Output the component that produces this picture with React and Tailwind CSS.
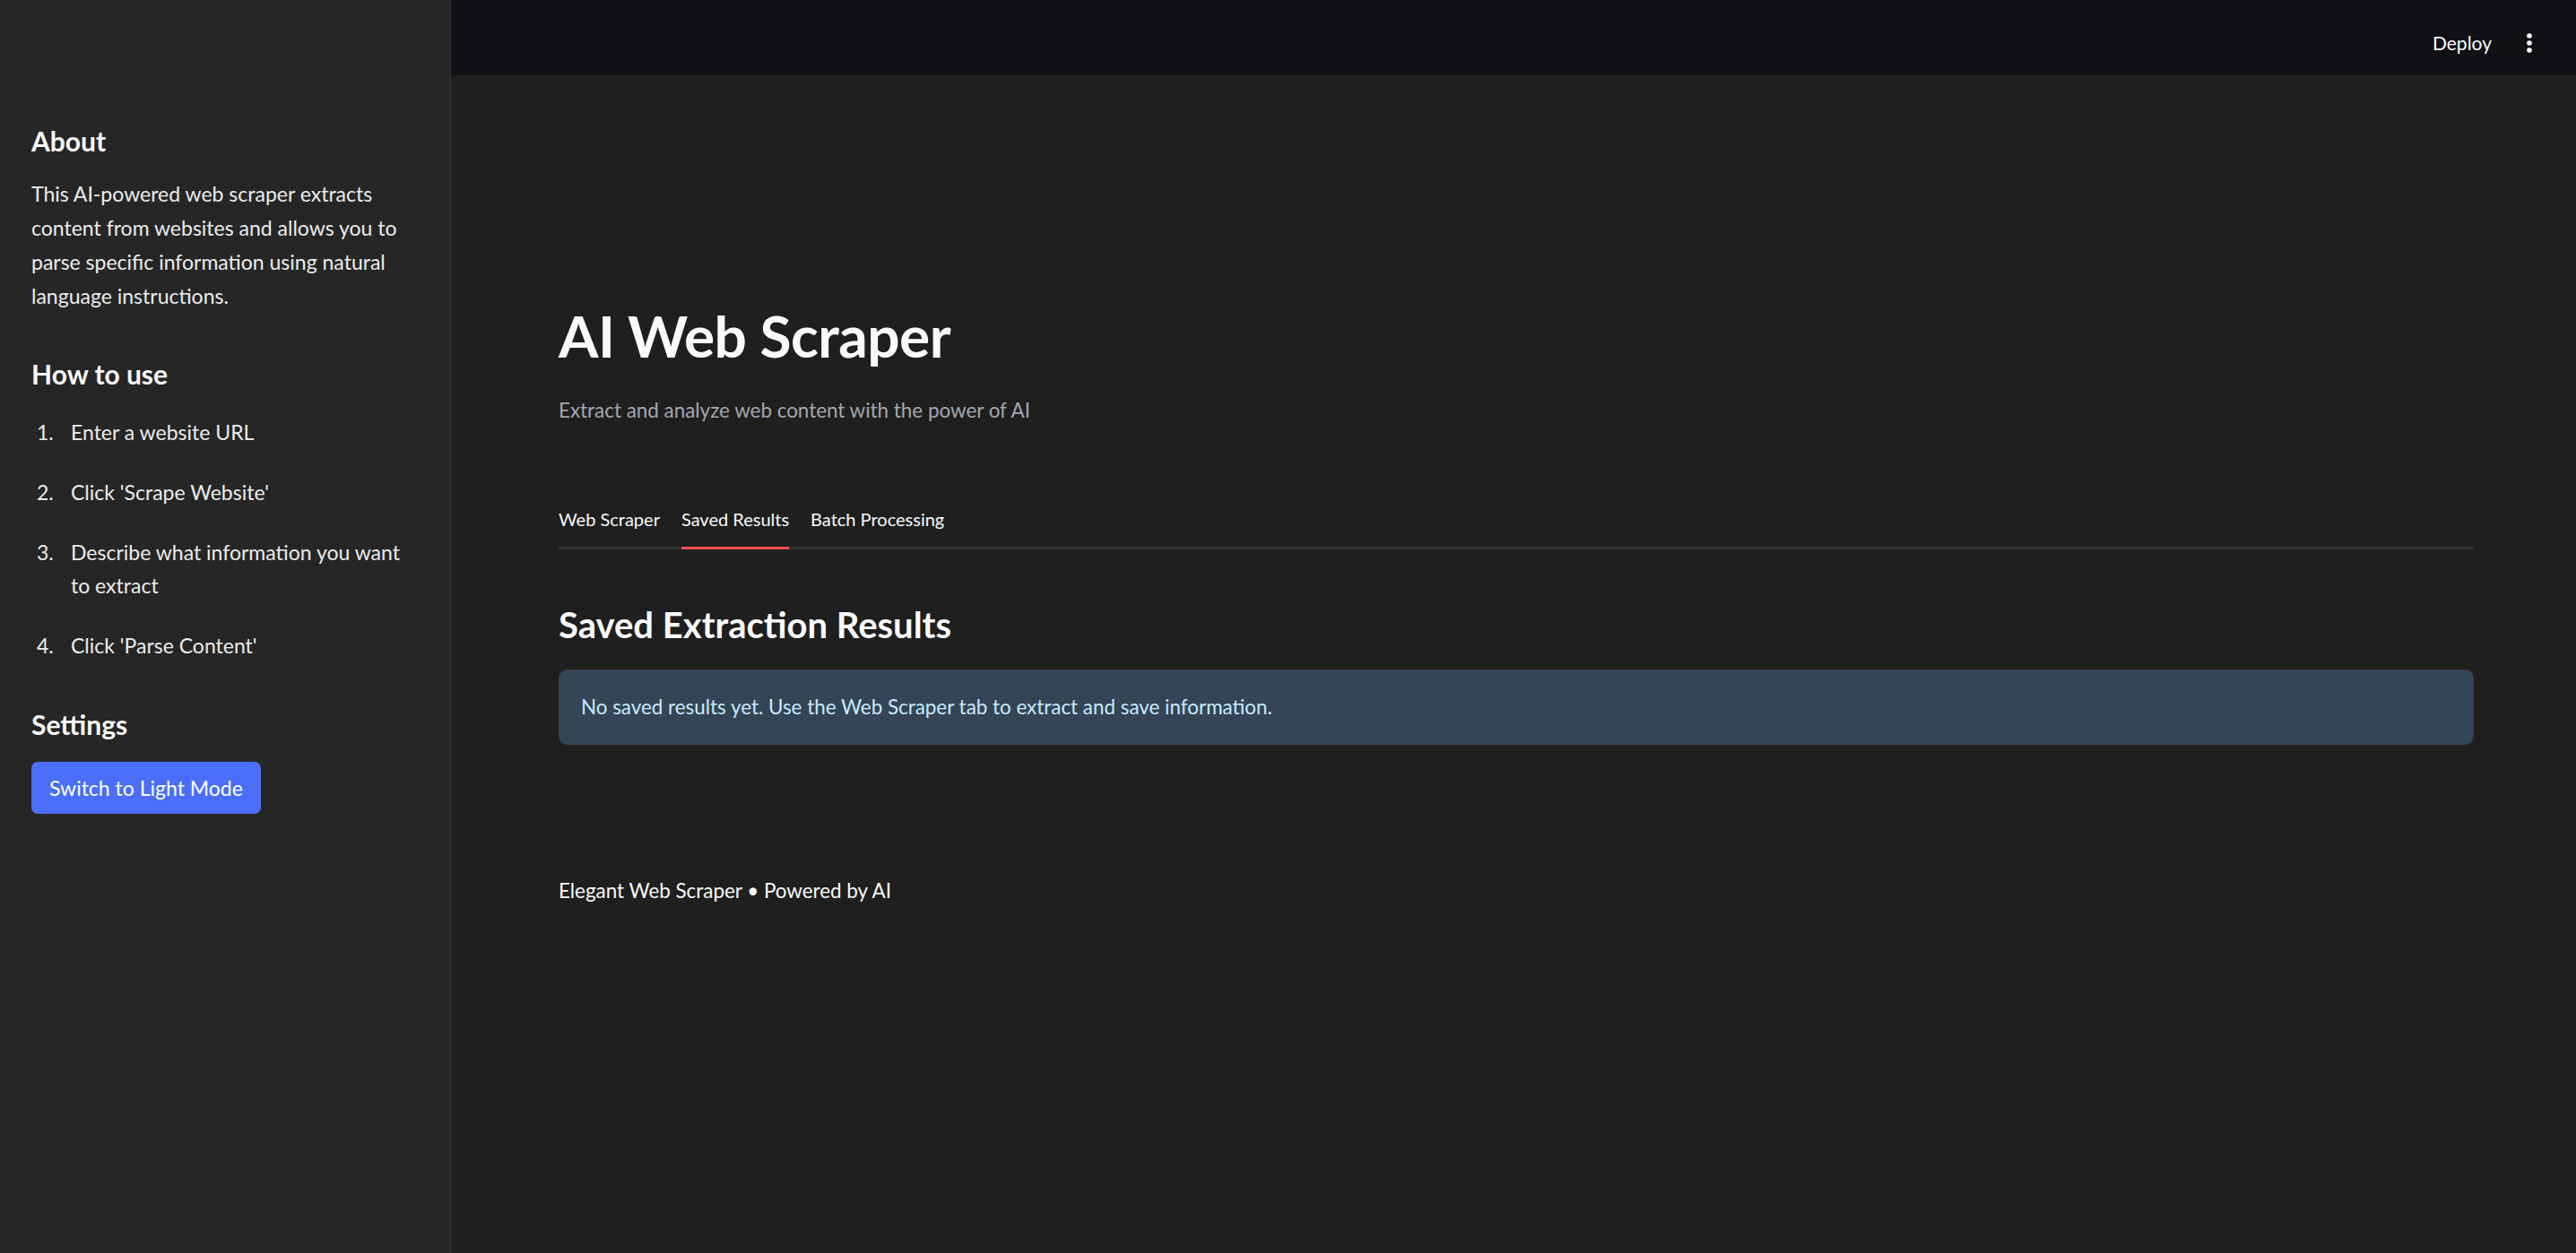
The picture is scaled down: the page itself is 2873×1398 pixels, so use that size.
import { useState } from 'react';

const steps = [
  "Enter a website URL",
  "Click 'Scrape Website'",
  "Describe what information you want to extract",
  "Click 'Parse Content'",
];

const tabs = ["Web Scraper", "Saved Results", "Batch Processing"];

export default function App() {
  const [tab, setTab] = useState(1);

  return (
    <div className="flex w-full h-[1398px] overflow-hidden font-['Lato',sans-serif] text-[#fafafa]">
      {/* SIDEBAR */}
      <aside className="w-[503px] shrink-0 bg-[#262626] border-r border-[#333333] px-[35px] pt-[137px]">
        <h3 className="text-[30px] font-bold leading-[40px]">About</h3>
        <p className="mt-[20px] text-[23px] leading-[38px] text-[#ececec]">
          This AI-powered web scraper extracts content from websites and allows you to parse specific information using natural language instructions.
        </p>

        <h3 className="mt-[48px] text-[30px] font-bold leading-[40px]">How to use</h3>
        <ol className="mt-[27px] flex flex-col gap-[30px] text-[23px] leading-[37px] text-[#ececec]">
          {steps.map((s, i) => (
            <li key={i} className="flex">
              <span className="w-[44px] shrink-0 pl-[6px]">{i + 1}.</span>
              <span>{s}</span>
            </li>
          ))}
        </ol>

        <h3 className="mt-[49px] text-[30px] font-bold leading-[40px]">Settings</h3>
        <button className="mt-[22px] h-[58px] px-[20px] rounded-[7px] bg-[#4a6ef7] text-white text-[23px]">
          Switch to Light Mode
        </button>
      </aside>

      {/* MAIN */}
      <div className="flex-1 flex flex-col bg-[#1f1f1f]">
        <header className="h-[84px] shrink-0 bg-[#0f1116] flex items-center justify-end gap-[38px] pr-[48px] pt-[12px]">
          <span className="text-[21px] text-[#fafafa]">Deploy</span>
          <svg width="8" height="22" viewBox="0 0 8 22" fill="#fafafa">
            <circle cx="4" cy="3" r="2.8" />
            <circle cx="4" cy="11" r="2.8" />
            <circle cx="4" cy="19" r="2.8" />
          </svg>
        </header>

        <main className="pl-[120px] pr-[114px] pt-[251px]">
          <h1 className="text-[64px] font-bold leading-[80px] tracking-[-0.5px]">AI Web Scraper</h1>
          <p className="mt-[25px] text-[22.4px] leading-[36px] text-[#a3a8b0]">
            Extract and analyze web content with the power of AI
          </p>

          <div className="mt-[88px] flex gap-[24px] border-b-[3px] border-[#333333]">
            {tabs.map((t, i) => (
              <button
                key={t}
                onClick={() => setTab(i)}
                className={`pb-[16px] -mb-[3px] border-b-[3px] text-[20px] leading-[30px] ${tab === i ? 'border-[#ff4b4b] text-[#fafafa]' : 'border-transparent text-[#fafafa]'}`}
              >
                {t}
              </button>
            ))}
          </div>

          <h2 className="mt-[58px] text-[40px] font-bold leading-[52px]">Saved Extraction Results</h2>

          <div className="mt-[24px] h-[84px] rounded-[10px] bg-[#344556] flex items-center px-[25px]">
            <span className="text-[22.4px] text-[#c7ebff]">
              No saved results yet. Use the Web Scraper tab to extract and save information.
            </span>
          </div>

          <p className="mt-[145px] text-[22.4px] leading-[36px] text-[#fafafa]">
            Elegant Web Scraper • Powered by AI
          </p>
        </main>
      </div>
    </div>
  );
}
